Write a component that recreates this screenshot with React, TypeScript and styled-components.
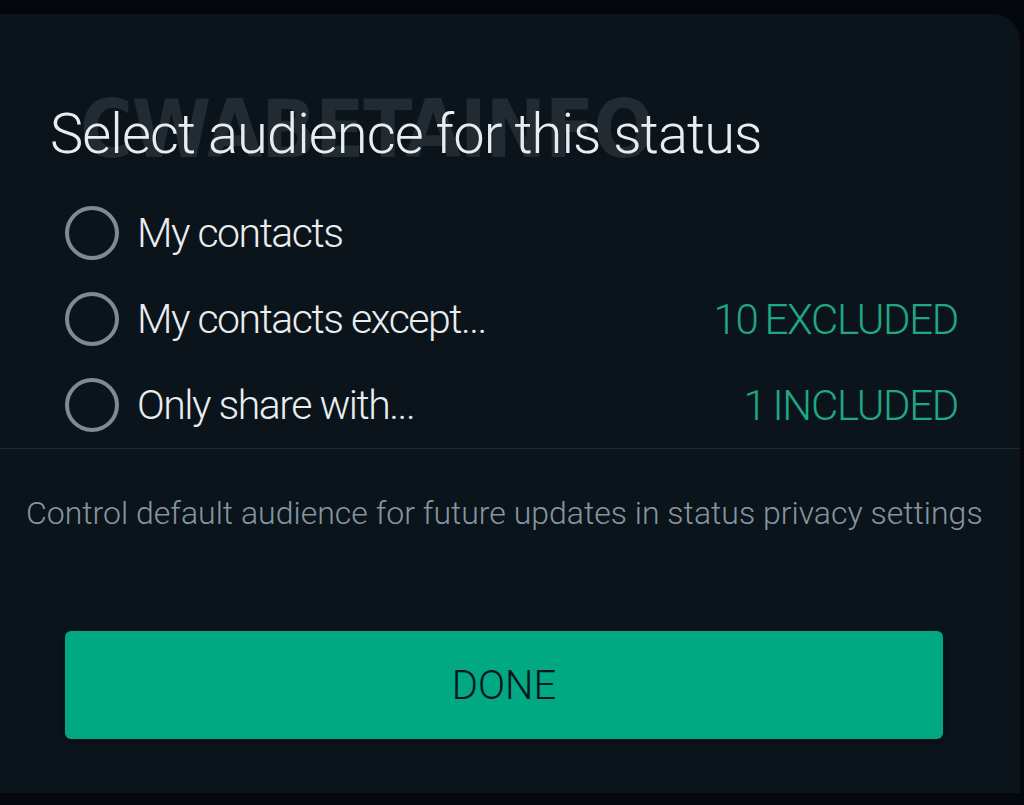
import styled, { createGlobalStyle } from "styled-components";
import { useState } from "react";

const GlobalStyle = createGlobalStyle`
  html, body {
    margin: 0;
    padding: 0;
    background: #04070c;
  }
  * {
    box-sizing: border-box;
  }
`;

const Screen = styled.div`
  width: 1024px;
  height: 805px;
  padding-top: 14px;
  background: #04070c;
  overflow: hidden;
`;

const Sheet = styled.div`
  width: 1020px;
  height: 779px;
  background: #0b141b;
  border-top-right-radius: 27px;
  display: flex;
  flex-direction: column;
`;

const Header = styled.div`
  position: relative;
  margin-top: 92px;
  padding-left: 50px;
  height: 56px;
`;

const Watermark = styled.div`
  position: absolute;
  left: 80px;
  top: -16px;
  font-family: "DejaVu Sans Condensed", "DejaVu Sans", sans-serif;
  font-stretch: condensed;
  font-weight: 700;
  font-size: 80px;
  line-height: 1;
  letter-spacing: -1px;
  color: #232b32;
  white-space: nowrap;
  user-select: none;
`;

const Title = styled.h1`
  position: relative;
  margin: 0;
  font-family: Roboto, "Liberation Sans", sans-serif;
  font-weight: 300;
  font-size: 56px;
  line-height: 56px;
  letter-spacing: -0.9px;
  color: #e9edef;
  white-space: nowrap;
`;

const Options = styled.div`
  margin-top: 28px;
  display: flex;
  flex-direction: column;
  border-bottom: 1.5px solid #1e2930;
`;

const OptionRow = styled.label`
  height: 86px;
  padding: 0 62px 0 65px;
  display: flex;
  align-items: center;
  cursor: pointer;
`;

const Radio = styled.span<{ $checked: boolean }>`
  flex: none;
  width: 54px;
  height: 54px;
  border-radius: 50%;
  border: 4.5px solid ${(p) => (p.$checked ? "#00a884" : "#7d8b94")};
  display: flex;
  align-items: center;
  justify-content: center;

  &::after {
    content: "";
    width: 26px;
    height: 26px;
    border-radius: 50%;
    background: #00a884;
    display: ${(p) => (p.$checked ? "block" : "none")};
  }
`;

const Label = styled.span`
  margin-left: 18px;
  flex: 1;
  font-family: Roboto, "Liberation Sans", sans-serif;
  font-weight: 300;
  font-size: 41px;
  letter-spacing: -1.5px;
  color: #e9edef;
  white-space: nowrap;
`;

const Count = styled.span`
  font-family: Roboto, "Liberation Sans", sans-serif;
  font-weight: 300;
  font-size: 42px;
  letter-spacing: -1.3px;
  word-spacing: -2px;
  color: #1fa884;
  white-space: nowrap;
`;

const Hint = styled.p`
  margin: 44px 0 0;
  padding-left: 26px;
  font-family: Roboto, "Liberation Sans", sans-serif;
  font-weight: 300;
  font-size: 32px;
  line-height: 40px;
  color: #8696a0;
  white-space: nowrap;
`;

const DoneButton = styled.button`
  margin: 98px 0 0 65px;
  width: 878px;
  height: 108px;
  border: none;
  border-radius: 6px;
  background: #00a884;
  box-shadow: 0 3px 6px rgba(0, 0, 0, 0.35);
  font-family: Roboto, "Liberation Sans", sans-serif;
  font-weight: 300;
  font-size: 40px;
  color: #0b141b;
  cursor: pointer;
`;

const options = [
  { id: "contacts", label: "My contacts", count: "" },
  { id: "except", label: "My contacts except...", count: "10 EXCLUDED" },
  { id: "only", label: "Only share with...", count: "1 INCLUDED" },
];

export default function App() {
  const [selected, setSelected] = useState<string | null>(null);

  return (
    <>
      <GlobalStyle />
      <Screen>
        <Sheet>
          <Header>
            <Watermark>CWABETAINFO</Watermark>
            <Title>Select audience for this status</Title>
          </Header>
          <Options>
            {options.map((o) => (
              <OptionRow key={o.id} onClick={() => setSelected(o.id)}>
                <Radio $checked={selected === o.id} />
                <Label>{o.label}</Label>
                {o.count && <Count>{o.count}</Count>}
              </OptionRow>
            ))}
          </Options>
          <Hint>Control default audience for future updates in status privacy settings</Hint>
          <DoneButton>DONE</DoneButton>
        </Sheet>
      </Screen>
    </>
  );
}
